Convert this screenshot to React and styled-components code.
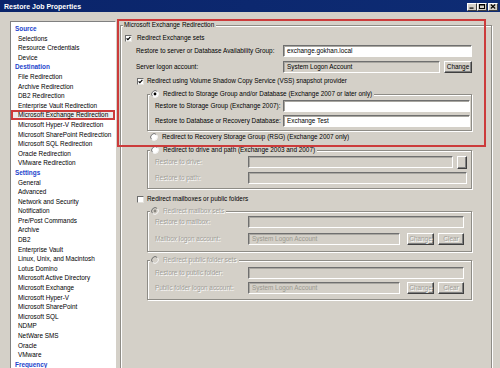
import React from "react";
import styled, { createGlobalStyle, css } from "styled-components";

const GlobalStyle = createGlobalStyle`
  html, body {
    margin: 0;
    padding: 0;
    background: #d4d0c8;
  }
  body {
    font-family: "Liberation Sans", Arial, sans-serif;
  }
`;

const Window = styled.div`
  position: relative;
  width: 500px;
  height: 368px;
  overflow: hidden;
  background: #d4d0c8;
  display: flex;
  flex-direction: column;
  font-size: 6.4px;
  line-height: 1;
  color: #000;
`;

const TitleBar = styled.div`
  height: 12px;
  flex-shrink: 0;
  display: flex;
  align-items: center;
  justify-content: space-between;
  padding: 0 2px 0 4px;
  background: linear-gradient(90deg, #0a246a, #0e2c74);
  color: #fff;
  font-weight: bold;
  font-size: 7px;
`;

const Caps = styled.div`
  display: flex;
  align-items: center;
  padding-top: 1px;
`;

const CapButton = styled.span`
  width: 10px;
  height: 8px;
  box-sizing: border-box;
  margin-left: ${(p) => p.$gap || 0}px;
  background: #d4d0c8;
  border: 1px solid;
  border-color: #fff #404040 #404040 #fff;
  display: flex;
  align-items: center;
  justify-content: center;
`;

const Main = styled.div`
  flex: 1;
  min-height: 0;
  display: flex;
  align-items: flex-start;
  gap: 4px;
  padding: 9px 0 0 10px;
`;

const NavList = styled.div`
  width: 106px;
  height: 360px;
  flex-shrink: 0;
  box-sizing: border-box;
  background: #fff;
  border: 1px solid;
  border-color: #808080 #fff #fff #808080;
  padding: 2px 1px;
  line-height: 9.6px;
  white-space: nowrap;
  overflow: hidden;
`;

const NavHeading = styled.div`
  height: 9.6px;
  padding-left: 3px;
  font-weight: bold;
  color: #1c44cc;
`;

const NavItem = styled.div`
  height: 9.6px;
  margin: 0 -1px;
  padding-left: 7px;
  ${(p) =>
    p.$selected &&
    css`
      background: #ececec;
      box-shadow: inset 0 0 0 2px #cc3b3b;
    `}
`;

const GroupBox = styled.fieldset`
  box-sizing: border-box;
  flex-shrink: 0;
  min-width: 0;
  width: ${(p) => p.$width}px;
  height: ${(p) => (p.$height ? `${p.$height}px` : "auto")};
  margin: ${(p) => p.$top || 0}px 0 0 ${(p) => p.$left || 0}px;
  padding: 0;
  border: 1px solid #8e8c86;
  box-shadow: inset 1px 1px 0 #fff, 1px 1px 0 #fff;
`;

const Caption = styled.legend`
  margin-left: 2px;
  padding: 0 2px 0 1px;
  background: #d4d0c8;
  color: ${(p) => (p.$disabled ? "#a09e98" : "#000")};
  text-shadow: ${(p) => (p.$disabled ? "1px 1px 0 #fff" : "none")};
`;

const CaptionInner = styled.span`
  display: flex;
  align-items: center;
  gap: 4px;
  height: ${(p) => p.$h}px;
`;

const Pane = styled.div`
  padding: ${(p) => p.$pad};
`;

const CheckRow = styled.div`
  display: flex;
  align-items: center;
  gap: ${(p) => p.$gap || 5}px;
  height: 10px;
  margin: ${(p) => p.$top || 0}px 0 0 ${(p) => p.$indent || 0}px;
  color: ${(p) => (p.$disabled ? "#a09e98" : "#000")};
  white-space: nowrap;
`;

const FieldRow = styled.div`
  display: flex;
  align-items: center;
  height: 12px;
  margin: ${(p) => p.$top || 0}px 0 0 ${(p) => p.$indent || 0}px;
`;

const Label = styled.span`
  width: ${(p) => p.$w}px;
  flex-shrink: 0;
  white-space: nowrap;
  color: ${(p) => (p.$disabled ? "#a09e98" : "#000")};
  text-shadow: ${(p) => (p.$disabled ? "1px 1px 0 #fff" : "none")};
`;

const Field = styled.div`
  flex: ${(p) => (p.$w ? `0 0 ${p.$w}px` : "1 1 0")};
  height: 12px;
  box-sizing: border-box;
  border: 1px solid;
  border-color: #6f6f6f #fff #fff #6f6f6f;
  box-shadow: inset 1px 1px 0 #a8a6a0;
  background: ${(p) => (p.$grey ? "#d4d0c8" : "#fff")};
  color: ${(p) => (p.$muted ? "#9a988f" : "#000")};
  padding-left: 3px;
  display: flex;
  align-items: center;
  white-space: nowrap;
  overflow: hidden;
`;

const Button = styled.button`
  width: ${(p) => p.$w}px;
  height: ${(p) => p.$h || 12}px;
  flex-shrink: 0;
  box-sizing: border-box;
  margin: 0 0 0 ${(p) => p.$ml || 0}px;
  padding: 0;
  font: inherit;
  background: #d4d0c8;
  border: 1px solid;
  border-color: #fff #404040 #404040 #fff;
  box-shadow: inset -1px -1px 0 #808080;
  color: ${(p) => (p.$disabled ? "#a09e98" : "#000")};
  text-shadow: ${(p) => (p.$disabled ? "1px 1px 0 #fff" : "none")};
`;

const Box = styled.span`
  width: 7px;
  height: 7px;
  flex-shrink: 0;
  box-sizing: border-box;
  background: #fff;
  border: 1px solid;
  border-color: #6d6d6d #e4e2dc #e4e2dc #6d6d6d;
  display: flex;
  align-items: center;
  justify-content: center;
`;

const Highlight = styled.div`
  position: absolute;
  left: 117px;
  top: 19px;
  width: 369px;
  height: 128px;
  box-sizing: border-box;
  border: 2px solid #cc3b3b;
  pointer-events: none;
`;

const Check = ({ checked }) => (
  <Box>
    {checked && (
      <svg width="5" height="5" viewBox="0 0 5 5">
        <path d="M0.6 2.3 L1.9 3.7 L4.4 0.9" stroke="#000" strokeWidth="1.2" fill="none" />
      </svg>
    )}
  </Box>
);

const Radio = ({ checked, disabled }) => (
  <svg width="8" height="8" viewBox="0 0 8 8" style={{ flexShrink: 0 }}>
    <circle cx="4" cy="4" r="3.5" fill={disabled ? "#d4d0c8" : "#fff"} />
    <path d="M1.53 6.47 A3.5 3.5 0 0 1 6.47 1.53" stroke="#707070" fill="none" />
    <path d="M6.47 1.53 A3.5 3.5 0 0 1 1.53 6.47" stroke="#f4f4f4" fill="none" />
    {checked && <circle cx="4" cy="4" r="1.4" fill={disabled ? "#8a8882" : "#000"} />}
  </svg>
);

const sections = [
  { title: "Source", items: ["Selections", "Resource Credentials", "Device"] },
  {
    title: "Destination",
    items: [
      "File Redirection",
      "Archive Redirection",
      "DB2 Redirection",
      "Enterprise Vault Redirection",
      "Microsoft Exchange Redirection",
      "Microsoft Hyper-V Redirection",
      "Microsoft SharePoint Redirection",
      "Microsoft SQL Redirection",
      "Oracle Redirection",
      "VMware Redirection",
    ],
  },
  {
    title: "Settings",
    items: [
      "General",
      "Advanced",
      "Network and Security",
      "Notification",
      "Pre/Post Commands",
      "Archive",
      "DB2",
      "Enterprise Vault",
      "Linux, Unix, and Macintosh",
      "Lotus Domino",
      "Microsoft Active Directory",
      "Microsoft Exchange",
      "Microsoft Hyper-V",
      "Microsoft SharePoint",
      "Microsoft SQL",
      "NDMP",
      "NetWare SMS",
      "Oracle",
      "VMware",
    ],
  },
  { title: "Frequency", items: [] },
];

const selected = "Microsoft Exchange Redirection";

export default function App() {
  return (
    <>
      <GlobalStyle />
      <Window>
        <TitleBar>
          <span>Restore Job Properties</span>
          <Caps>
            <CapButton>
              <svg width="6" height="5" viewBox="0 0 6 5">
                <rect x="0.5" y="3.5" width="4" height="1.2" fill="#000" />
              </svg>
            </CapButton>
            <CapButton>
              <svg width="6" height="5" viewBox="0 0 6 5">
                <rect x="0.5" y="0.5" width="5" height="4" stroke="#000" fill="none" />
                <rect x="0.5" y="0.5" width="5" height="1" fill="#000" />
              </svg>
            </CapButton>
            <CapButton $gap={1}>
              <svg width="6" height="5" viewBox="0 0 6 5">
                <path d="M0.8 0.5 L5.2 4.5 M5.2 0.5 L0.8 4.5" stroke="#000" strokeWidth="1.1" />
              </svg>
            </CapButton>
          </Caps>
        </TitleBar>

        <Main>
          <NavList>
            {sections.map((s) => (
              <React.Fragment key={s.title}>
                <NavHeading>{s.title}</NavHeading>
                {s.items.map((it) => (
                  <NavItem key={s.title + it} $selected={it === selected}>
                    {it}
                  </NavItem>
                ))}
              </React.Fragment>
            ))}
          </NavList>

          <GroupBox $width={372} $height={360}>
            <Caption>
              <CaptionInner $h={8}>Microsoft Exchange Redirection</CaptionInner>
            </Caption>
            <Pane $pad="4px 19px 0 4px">
              <CheckRow>
                <Check checked />
                Redirect Exchange sets
              </CheckRow>
              <FieldRow $top={2} $indent={11}>
                <Label $w={147}>Restore to server or Database Availability Group:</Label>
                <Field>exchange.gokhan.local</Field>
              </FieldRow>
              <FieldRow $top={4} $indent={11}>
                <Label $w={147}>Server logon account:</Label>
                <Field $grey>System Logon Account</Field>
                <Button $w={28} $ml={4}>Change</Button>
              </FieldRow>
              <CheckRow $top={3} $indent={12} $gap={3}>
                <Check checked />
                Redirect using Volume Shadow Copy Service (VSS) snapshot provider
              </CheckRow>

              <GroupBox $width={325} $left={22} $top={3}>
                <Caption>
                  <CaptionInner $h={10}>
                    <Radio checked />
                    Redirect to Storage Group and/or Database (Exchange 2007 or later only)
                  </CaptionInner>
                </Caption>
                <Pane $pad="1px 1px 3px 7px">
                  <FieldRow>
                    <Label $w={128}>Restore to Storage Group (Exchange 2007):</Label>
                    <Field />
                  </FieldRow>
                  <FieldRow $top={3}>
                    <Label $w={128}>Restore to Database or Recovery Database:</Label>
                    <Field>Exchange Test</Field>
                  </FieldRow>
                </Pane>
              </GroupBox>

              <CheckRow $top={1} $indent={25} $gap={4}>
                <Radio />
                Redirect to Recovery Storage Group (RSG) (Exchange 2007 only)
              </CheckRow>

              <GroupBox $width={325} $left={22} $top={3}>
                <Caption>
                  <CaptionInner $h={10}>
                    <Radio />
                    Redirect to drive and path (Exchange 2003 and 2007)
                  </CaptionInner>
                </Caption>
                <Pane $pad="1px 4px 4px 7px">
                  <FieldRow>
                    <Label $w={93} $disabled>Restore to drive:</Label>
                    <Field $grey />
                    <Button $w={10} $h={13} $ml={4} />
                  </FieldRow>
                  <FieldRow $top={4}>
                    <Label $w={93} $disabled>Restore to path:</Label>
                    <Field $grey />
                  </FieldRow>
                </Pane>
              </GroupBox>

              <CheckRow $top={5} $indent={12} $gap={3}>
                <Check />
                Redirect mailboxes or public folders
              </CheckRow>

              <GroupBox $width={325} $left={22} $top={2}>
                <Caption $disabled>
                  <CaptionInner $h={10}>
                    <Radio checked disabled />
                    Redirect mailbox sets
                  </CaptionInner>
                </Caption>
                <Pane $pad="0 7px 6px 7px">
                  <FieldRow>
                    <Label $w={93} $disabled>Restore to mailbox:</Label>
                    <Field $grey />
                  </FieldRow>
                  <FieldRow $top={5}>
                    <Label $w={93} $disabled>Mailbox logon account:</Label>
                    <Field $grey $muted $w={152}>System Logon Account</Field>
                    <Button $w={27} $ml={7} $disabled>Change</Button>
                    <Button $w={26} $ml={4} $disabled>Clear</Button>
                  </FieldRow>
                </Pane>
              </GroupBox>

              <GroupBox $width={325} $left={22} $top={3}>
                <Caption $disabled>
                  <CaptionInner $h={10}>
                    <Radio disabled />
                    Redirect public folder sets
                  </CaptionInner>
                </Caption>
                <Pane $pad="2px 7px 5px 7px">
                  <FieldRow>
                    <Label $w={93} $disabled>Restore to public folder:</Label>
                    <Field $grey />
                  </FieldRow>
                  <FieldRow $top={3}>
                    <Label $w={93} $disabled>Public folder logon account:</Label>
                    <Field $grey $muted $w={152}>System Logon Account</Field>
                    <Button $w={27} $ml={7} $disabled>Change</Button>
                    <Button $w={26} $ml={4} $disabled>Clear</Button>
                  </FieldRow>
                </Pane>
              </GroupBox>
            </Pane>
          </GroupBox>
        </Main>

        <Highlight />
      </Window>
    </>
  );
}
